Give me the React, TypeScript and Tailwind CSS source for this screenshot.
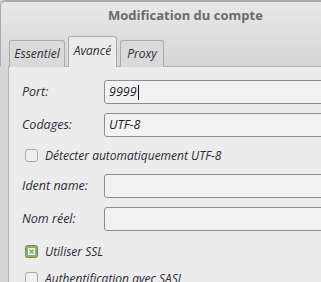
import React from "react";

const font = { fontFamily: '"Open Sans", "DejaVu Sans", sans-serif' };

function Box({ checked }: { checked?: boolean }) {
  if (checked) {
    return (
      <svg width="13" height="13" viewBox="0 0 13 13" className="shrink-0">
        <rect x="0.5" y="0.5" width="12" height="12" rx="2" fill="#8fb072" stroke="#6a8c4e" />
        <rect x="3" y="3" width="7" height="7" fill="#f4f7f0" />
        <path d="M4.5 4.5 L8.5 8.5 M8.5 4.5 L4.5 8.5" stroke="#7da35c" strokeWidth="1.4" />
      </svg>
    );
  }
  return <div className="w-[13px] h-[13px] shrink-0 rounded-[3px] border border-[#a9a9a9] bg-[#f0f0f0]" />;
}

function Input({ value, cursor }: { value?: string; cursor?: boolean }) {
  return (
    <div className="ml-auto w-[230px] h-[24px] shrink-0 rounded-[3px] border border-[#8e8e8e] bg-[#f2f2f2] flex items-center pl-[4px] text-[12.5px] italic text-[#1e1e2a]">
      {value}
      {cursor && <span className="inline-block w-px h-[15px] bg-[#111] ml-[1px]" />}
    </div>
  );
}

function Row({ label, value, cursor, mt }: { label: string; value?: string; cursor?: boolean; mt: string }) {
  return (
    <div className={`flex items-center h-[24px] ${mt}`}>
      <span className="italic text-[12.5px] text-[#2b2b33] w-[82px] shrink-0">{label}</span>
      <Input value={value} cursor={cursor} />
    </div>
  );
}

export default function App() {
  return (
    <div style={font} className="w-[321px] h-[282px] overflow-hidden bg-[#d6d6d6] flex flex-col">
      <div className="h-[66px] shrink-0 flex flex-col rounded-tl-[5px] border-t-2 border-l border-[#ababab] bg-gradient-to-b from-[#e8e8e8] to-[#d6d6d6]">
        <div className="pl-[107px] pt-[3px] text-[13px] font-bold text-[#6b6b6b] leading-[20px]">
          Modification du compte
        </div>
        <div className="mt-auto flex items-end pl-[8px] gap-[3px] relative z-10 -mb-px">
          <div className="h-[27px] w-[56px] rounded-t-[3px] border border-b-0 border-[#acacac] bg-[#dadada] flex items-center justify-center italic text-[12px] text-[#2e2e36]">
            Essentiel
          </div>
          <div className="h-[31px] w-[49px] rounded-t-[3px] border border-b-0 border-[#acacac] bg-[#ececec] flex items-start pt-[5px] justify-center italic text-[12px] text-[#2e2e36]">
            Avancé
          </div>
          <div className="h-[27px] w-[44px] rounded-t-[3px] border border-b-0 border-[#acacac] bg-[#dadada] flex items-center justify-center italic text-[12px] text-[#2e2e36]">
            Proxy
          </div>
        </div>
      </div>
      <div className="flex-1 ml-[8px] border-l border-t border-[#b4b4b4] bg-[#ececec] pl-[13px] pt-[13px] flex flex-col">
        <Row label="Port:" value="9999" cursor mt="" />
        <Row label="Codages:" value="UTF-8" mt="mt-[9px]" />
        <div className="flex items-center h-[13px] mt-[12px] pl-[3px] gap-[7px] italic text-[12px] text-[#2b2b33] whitespace-nowrap">
          <Box />
          <span>Détecter automatiquement UTF-8</span>
        </div>
        <Row label="Ident name:" mt="mt-[12px]" />
        <Row label="Nom réel:" mt="mt-[9px]" />
        <div className="flex items-center h-[13px] mt-[14px] pl-[3px] gap-[7px] italic text-[12px] text-[#2b2b33] whitespace-nowrap">
          <Box checked />
          <span>Utiliser SSL</span>
        </div>
        <div className="flex items-center h-[13px] mt-[14px] pl-[3px] gap-[7px] italic text-[12px] text-[#2b2b33] whitespace-nowrap">
          <Box />
          <span>Authentification avec SASL</span>
        </div>
      </div>
    </div>
  );
}
